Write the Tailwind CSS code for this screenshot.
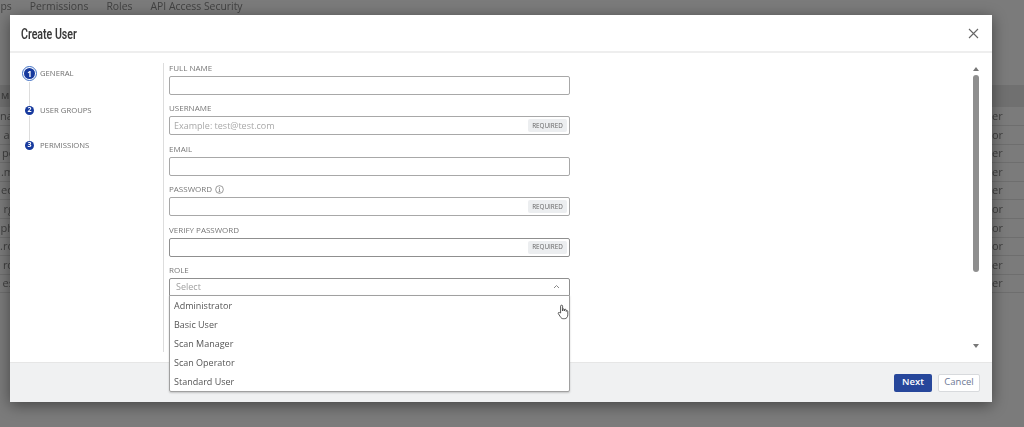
<!DOCTYPE html>
<html lang="en">
<head>
    <meta charset="UTF-8">
    <title>Create User</title>
    <script src="https://cdn.jsdelivr.net/npm/@tailwindcss/browser@4"></script>
</head>
<body class="relative w-[1024px] h-[427px] overflow-hidden bg-[#7b7b7b] font-['Open_Sans',sans-serif]">

    <!-- page behind the dialog -->
    <div class="blur-[0.6px] text-[#3f3f3f]">
        <div class="flex h-[13px] items-center gap-[18px] -ml-[24px] text-[10.4px] leading-none text-[#424242]">
            <span>Groups</span><span>Permissions</span><span>Roles</span><span>API Access Security</span>
        </div>
        <div class="mt-[72px] h-[22px] bg-[#707070] flex items-center text-[9px] font-semibold">
            <span class="w-[12px] text-right">MI</span>
        </div>
        <div class="pt-[0.5px] text-[11px]">
            <div class="flex h-[18.6px] items-center border-b border-[#6e6e6e]"><span class="w-[14px] text-right">nar</span><span class="ml-auto w-[32px]">er</span></div>
            <div class="flex h-[18.6px] items-center border-b border-[#6e6e6e]"><span class="w-[14px] text-right">ar</span><span class="ml-auto w-[32px]">or</span></div>
            <div class="flex h-[18.6px] items-center border-b border-[#6e6e6e]"><span class="w-[14px] text-right">pc</span><span class="ml-auto w-[32px]">er</span></div>
            <div class="flex h-[18.6px] items-center border-b border-[#6e6e6e]"><span class="w-[14px] text-right">.m</span><span class="ml-auto w-[32px]">er</span></div>
            <div class="flex h-[18.6px] items-center border-b border-[#6e6e6e]"><span class="w-[14px] text-right">eq</span><span class="ml-auto w-[32px]">er</span></div>
            <div class="flex h-[18.6px] items-center border-b border-[#6e6e6e]"><span class="w-[14px] text-right">rg</span><span class="ml-auto w-[32px]">or</span></div>
            <div class="flex h-[18.6px] items-center border-b border-[#6e6e6e]"><span class="w-[14px] text-right">ph</span><span class="ml-auto w-[32px]">or</span></div>
            <div class="flex h-[18.6px] items-center border-b border-[#6e6e6e]"><span class="w-[14px] text-right">.ro</span><span class="ml-auto w-[32px]">or</span></div>
            <div class="flex h-[18.6px] items-center border-b border-[#6e6e6e]"><span class="w-[14px] text-right">ro</span><span class="ml-auto w-[32px]">er</span></div>
            <div class="flex h-[18.6px] items-center border-b border-[#6e6e6e]"><span class="w-[14px] text-right">es</span><span class="ml-auto w-[32px]">er</span></div>
        </div>
    </div>

    <!-- dialog -->
    <div class="absolute left-[10px] top-[15px] w-[982px] h-[387px] flex flex-col bg-white shadow-[0_3px_14px_rgba(0,0,0,0.45)] blur-[0.45px]">
        <div class="h-[38px] shrink-0 flex items-center justify-between pl-[11px] pr-[13px] border-b-2 border-[#eeeeee]">
            <h1 class="mt-[3px] font-['Roboto',sans-serif] font-semibold text-[14.5px] text-[#3a3a3a] scale-x-[0.73] origin-left">Create User</h1>
            <svg class="mt-[1px] w-[11px] h-[11px]" viewBox="0 0 11 11" fill="none" stroke="#666" stroke-width="1.1"><path d="M1 1l9 9M10 1l-9 9"/></svg>
        </div>

        <div class="flex-1 flex min-h-0 pt-[10px]">
            <!-- stepper -->
            <div class="w-[153px] shrink-0 pl-[12px] pt-[2.5px] text-[7.7px] text-[#707070] uppercase">
                <div class="flex items-center h-[16px] gap-[3px]">
                    <span class="w-[15px] h-[15px] rounded-full border border-[#3f6fc4] flex items-center justify-center">
                        <span class="w-[11px] h-[11px] rounded-full bg-[#173a9e] text-white text-[8px] font-bold flex items-center justify-center">1</span>
                    </span>
                    <span>General</span>
                </div>
                <div class="ml-[7px] w-px h-[24px] bg-[#dddddd]"></div>
                <div class="flex items-center h-[10px] gap-[6px] pl-[3px]">
                    <span class="w-[9px] h-[9px] rounded-full bg-[#173a9e] text-white text-[7px] font-bold flex items-center justify-center">2</span>
                    <span>User Groups</span>
                </div>
                <div class="ml-[7px] w-px h-[25px] bg-[#dddddd]"></div>
                <div class="flex items-center h-[10px] gap-[6px] pl-[3px]">
                    <span class="w-[9px] h-[9px] rounded-full bg-[#173a9e] text-white text-[7px] font-bold flex items-center justify-center">3</span>
                    <span>Permissions</span>
                </div>
            </div>

            <!-- form -->
            <div class="w-[408px] h-[289px] shrink-0 border-l border-[#dddddd] pl-[5px] text-[8px] leading-[10px] text-[#777]">
                <div class="h-[13px] uppercase">Full Name</div>
                <div class="w-[401px] h-[19px] rounded-[2px] border border-[#a8a8a8] mb-[8.4px]"></div>

                <div class="h-[13px] uppercase">Username</div>
                <div class="w-[401px] h-[19px] rounded-[2px] border border-[#a8a8a8] mb-[8.4px] flex items-center justify-between pl-[4px] pr-[2px]">
                    <span class="text-[9px] text-[#a8a8a8]">Example: test@test.com</span>
                    <span class="h-[13px] w-[39px] bg-[#eceef0] rounded-[2px] text-[6.3px] text-[#666] flex items-center justify-center">REQUIRED</span>
                </div>

                <div class="h-[13px] uppercase">Email</div>
                <div class="w-[401px] h-[19px] rounded-[2px] border border-[#a8a8a8] mb-[8.4px]"></div>

                <div class="h-[13px] flex items-start gap-[3px] uppercase">
                    <span>Password</span>
                    <svg class="w-[9px] h-[9px] mt-[0.5px]" viewBox="0 0 10 10" fill="none" stroke="#777" stroke-width="0.8"><circle cx="5" cy="5" r="4.3"/><path d="M5 4.2v3.2M4 7.4h2M4.2 4.2H5M5 2.4v0.9"/></svg>
                </div>
                <div class="w-[401px] h-[19px] rounded-[2px] border border-[#a8a8a8] mb-[8.4px] flex items-center justify-end pr-[2px]">
                    <span class="h-[13px] w-[39px] bg-[#eceef0] rounded-[2px] text-[6.3px] text-[#666] flex items-center justify-center">REQUIRED</span>
                </div>

                <div class="h-[13px] uppercase">Verify Password</div>
                <div class="w-[401px] h-[19px] rounded-[2px] border border-[#8f8f8f] mb-[8.4px] flex items-center justify-end pr-[2px]">
                    <span class="h-[13px] w-[39px] bg-[#eceef0] rounded-[2px] text-[6.3px] text-[#666] flex items-center justify-center">REQUIRED</span>
                </div>

                <div class="h-[13px] uppercase">Role</div>
                <div class="relative w-[401px] z-10">
                    <div class="h-[18px] rounded-t-[2px] border border-[#8f8f8f] flex items-center justify-between pl-[6px] pr-[9px]">
                        <span class="text-[9px] text-[#a0a0a0]">Select</span>
                        <svg class="w-[7px] h-[5px]" viewBox="0 0 7 5" fill="none" stroke="#888" stroke-width="1"><path d="M1 4l2.5-2.5L6 4"/></svg>
                    </div>
                    <!-- open dropdown -->
                    <div class="absolute left-0 top-[17px] w-[401px] h-[97px] bg-white border border-[#a0a0a0] rounded-b-[2px] shadow-[0_1px_2px_rgba(0,0,0,0.2)] text-[9px] text-[#555] pl-[4px] pt-[1px]">
                        <div class="h-[19px] flex items-center">Administrator</div>
                        <div class="h-[19px] flex items-center">Basic User</div>
                        <div class="h-[19px] flex items-center">Scan Manager</div>
                        <div class="h-[19px] flex items-center">Scan Operator</div>
                        <div class="h-[19px] flex items-center">Standard User</div>
                        <svg class="absolute left-[387px] top-[8px] w-[12px] h-[16px]" viewBox="0 0 12 16" fill="#fff" stroke="#444" stroke-width="0.9" stroke-linejoin="round"><path d="M3.6 9V2.2a1 1 0 0 1 2 0V7l0-1.2a.9.9 0 0 1 1.8 0V7l0-.8a.9.9 0 0 1 1.8 0V7.4a.8.8 0 0 1 1.6 0v3.4c0 2.2-1.2 3.9-3.4 3.9H6.3c-1.4 0-2.1-.6-2.9-1.9L1.3 9.6c-.5-.9.7-1.7 1.4-.9z"/></svg>
                    </div>
                </div>
            </div>

            <div class="flex-1"></div>

            <!-- scrollbar -->
            <div class="w-[20px] shrink-0 h-[285px] flex flex-col items-start pl-[1px] pt-[4px]">
                <svg class="w-[6px] h-[4px]" viewBox="0 0 6 4" fill="#777"><path d="M3 0l3 4H0z"/></svg>
                <div class="w-[6px] h-[197px] mt-[4px] rounded-[3px] bg-[#8e8e8e]"></div>
                <svg class="w-[6px] h-[4px] mt-auto" viewBox="0 0 6 4" fill="#777"><path d="M0 0h6L3 4z"/></svg>
            </div>
        </div>

        <div class="h-[40px] shrink-0 bg-[#f0f1f2] border-t border-[#e6e6e6] flex items-center justify-end gap-[6px] pr-[12px]">
            <button class="w-[38px] h-[18px] rounded-[2px] bg-[#27479b] text-white text-[9.5px] font-semibold">Next</button>
            <button class="w-[42px] h-[18px] rounded-[2px] bg-white border border-[#d8dadd] text-[#6c7894] text-[9.5px]">Cancel</button>
        </div>
    </div>
</body>
</html>
